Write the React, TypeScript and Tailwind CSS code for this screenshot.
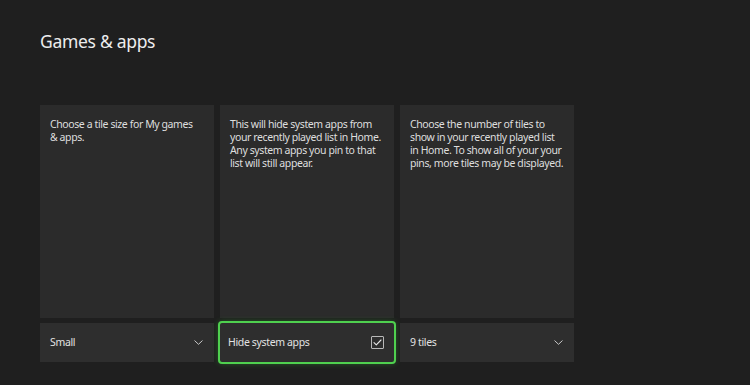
import * as React from 'react'

const columns = [
  {
    lines: ['Choose a tile size for My games', '& apps.'],
    value: 'Small',
    kind: 'select',
  },
  {
    lines: [
      'This will hide system apps from',
      'your recently played list in Home.',
      'Any system apps you pin to that',
      'list will still appear.',
    ],
    value: 'Hide system apps',
    kind: 'check',
  },
  {
    lines: [
      'Choose the number of tiles to',
      'show in your recently played list',
      'in Home. To show all of your your',
      'pins, more tiles may be displayed.',
    ],
    value: '9 tiles',
    kind: 'select',
  },
]

function Chevron() {
  return (
    <svg width="9" height="5" viewBox="0 0 9 5" fill="none" stroke="#c8c8c8" strokeWidth="1" strokeLinecap="round" strokeLinejoin="round">
      <path d="M0.8 0.8l3.7 3.5 3.7-3.5" />
    </svg>
  )
}

function CheckBox() {
  return (
    <div className="w-[13px] h-[13px] border border-[#b8b8b8] rounded-[1px] flex items-center justify-center">
      <svg width="9" height="7" viewBox="0 0 9 7" fill="none" stroke="#e6e6e6" strokeWidth="1.1" strokeLinecap="round" strokeLinejoin="round">
        <path d="M1 3.6l2.3 2.2L8 1" />
      </svg>
    </div>
  )
}

export default function App() {
  return (
    <div
      className="w-[750px] h-[385px] bg-[#1f1f1f] overflow-hidden pl-10 pt-[29px]"
      style={{ fontFamily: '"Noto Sans", "Open Sans", sans-serif' }}
    >
      <h1 className="text-[17.5px] leading-6 text-[#ededed] tracking-[-0.3px]">Games &amp; apps</h1>

      <div className="mt-[52px] flex gap-[6px]">
        {columns.map((col) => (
          <div key={col.value} className="w-[174px] flex flex-col gap-[5px]">
            <div className="h-[213px] bg-[#2b2b2b] pl-[10px] pt-[13px] text-[10.5px] leading-[13px] text-[#dedede] tracking-[-0.4px]">
              {col.lines.map((l) => (
                <div key={l} className="whitespace-nowrap">{l}</div>
              ))}
            </div>
            <div
              className={
                'h-[39px] bg-[#2e2e2e] flex items-center justify-between text-[10.5px] text-[#e2e2e2] tracking-[-0.35px] ' +
                (col.kind === 'check'
                  ? 'pl-[8px] pr-[10px] outline-2 outline-[#4fd04f] shadow-[0_0_6px_1px_rgba(60,200,60,0.45)] rounded-[2px]'
                  : 'pl-[10px] pr-[11px]')
              }
            >
              <span className="pt-[1px]">{col.value}</span>
              {col.kind === 'check' ? <CheckBox /> : <Chevron />}
            </div>
          </div>
        ))}
      </div>
    </div>
  )
}
